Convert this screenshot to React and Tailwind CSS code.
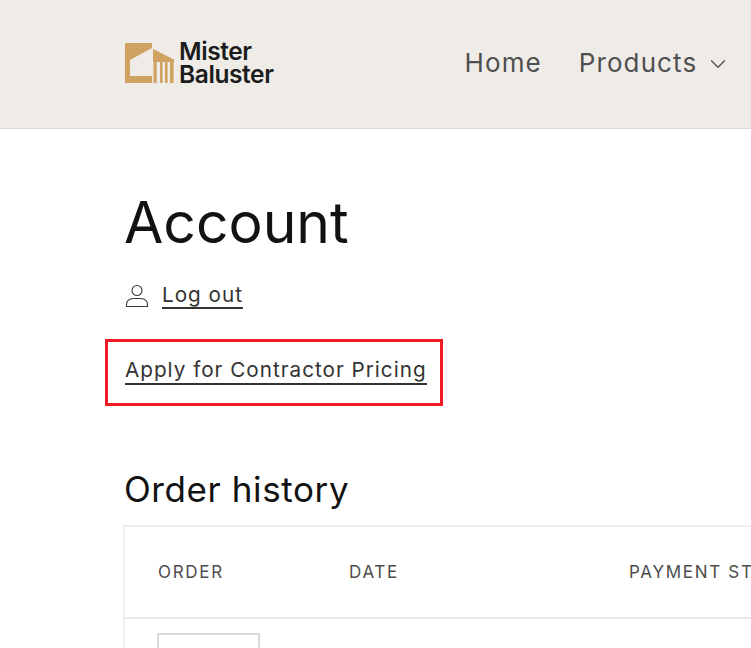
import { ChevronDown } from "lucide-react";

function Logo() {
  return (
    <div className="flex items-center gap-[4px]">
      <svg width="50" height="40" viewBox="0 0 50 40" fill="#cfa262">
        <path d="M0 0H27V5L5 17V33H27V40H0Z" />
        <path d="M28 6L49 16.5V19H28Z" />
        <rect x="28.5" y="19" width="3.2" height="21" />
        <rect x="35" y="19" width="2.6" height="21" />
        <rect x="40" y="19" width="2.6" height="21" />
        <rect x="45" y="19" width="3.6" height="21" />
      </svg>
      <div className="text-[24.5px] leading-[23px] font-semibold tracking-[-0.4px] text-[#1c1c1c]">
        <div>Mister</div>
        <div>Baluster</div>
      </div>
    </div>
  );
}

export default function App() {
  return (
    <div className="h-[648px] w-[751px] overflow-hidden bg-white font-['Inter',sans-serif] text-[#121212]">
      <header className="flex h-[129px] items-center border-b border-[#dedbd6] bg-[#efece8] pl-[125px] pb-[3px] whitespace-nowrap">
        <Logo />
        <nav className="ml-[191px] flex items-center text-[#4f4f4f]">
          <a className="text-[26px] font-normal tracking-[1.1px]">Home</a>
          <a className="ml-[37px] text-[26px] font-normal tracking-[1.1px]">Products</a>
          <ChevronDown className="mt-[3px] ml-[8px] size-[26px] text-[#4a4a4a]" strokeWidth={1.1} />
        </nav>
      </header>

      <main className="pl-[125px]">
        <h1 className="mt-[58px] -ml-[1px] text-[57px] leading-[72px] font-normal">Account</h1>

        <div className="mt-[23px] flex items-center">
          <svg width="24" height="24" viewBox="0 0 24 24" fill="none" stroke="#3a3a3a" strokeWidth="1.1">
            <circle cx="12" cy="6.5" r="5" />
            <path d="M1.5 22.5V20.5C1.5 17 4.5 14.5 8 14.5H16C19.5 14.5 22.5 17 22.5 20.5V22.5Z" />
          </svg>
          <a className="ml-[13px] border-b-2 border-[#333] text-[20.7px] leading-[25px] tracking-[1px] text-[#333]">
            Log out
          </a>
        </div>

        <div className="mt-[30px] -ml-[20px] flex h-[67px] w-[338px] items-center border-[3px] border-[#ed1c24] pb-[3px] pl-[17px]">
          <a className="border-b-2 border-[#333] text-[20.7px] leading-[26px] tracking-[1px] whitespace-nowrap text-[#333]">
            Apply for Contractor Pricing
          </a>
        </div>

        <h2 className="mt-[61px] -ml-[1px] text-[35px] leading-[44px] font-normal tracking-[0.6px]">Order history</h2>

        <div className="mt-[14px] -ml-[2px] w-[800px] border-2 border-r-0 border-[#efefef]">
          <div className="flex h-[92px] items-center border-b-2 border-[#e8e8e8] pt-[2px] pl-[33px] text-[17px] tracking-[1.7px] whitespace-nowrap text-[#4d4d4d]">
            <span className="w-[191px]">ORDER</span>
            <span className="w-[280px]">DATE</span>
            <span>PAYMENT STATUS</span>
          </div>
          <div className="pt-[14px] pl-[32px]">
            <div className="h-[40px] w-[103px] border-2 border-[#d9d9d9]" />
          </div>
        </div>
      </main>
    </div>
  );
}
